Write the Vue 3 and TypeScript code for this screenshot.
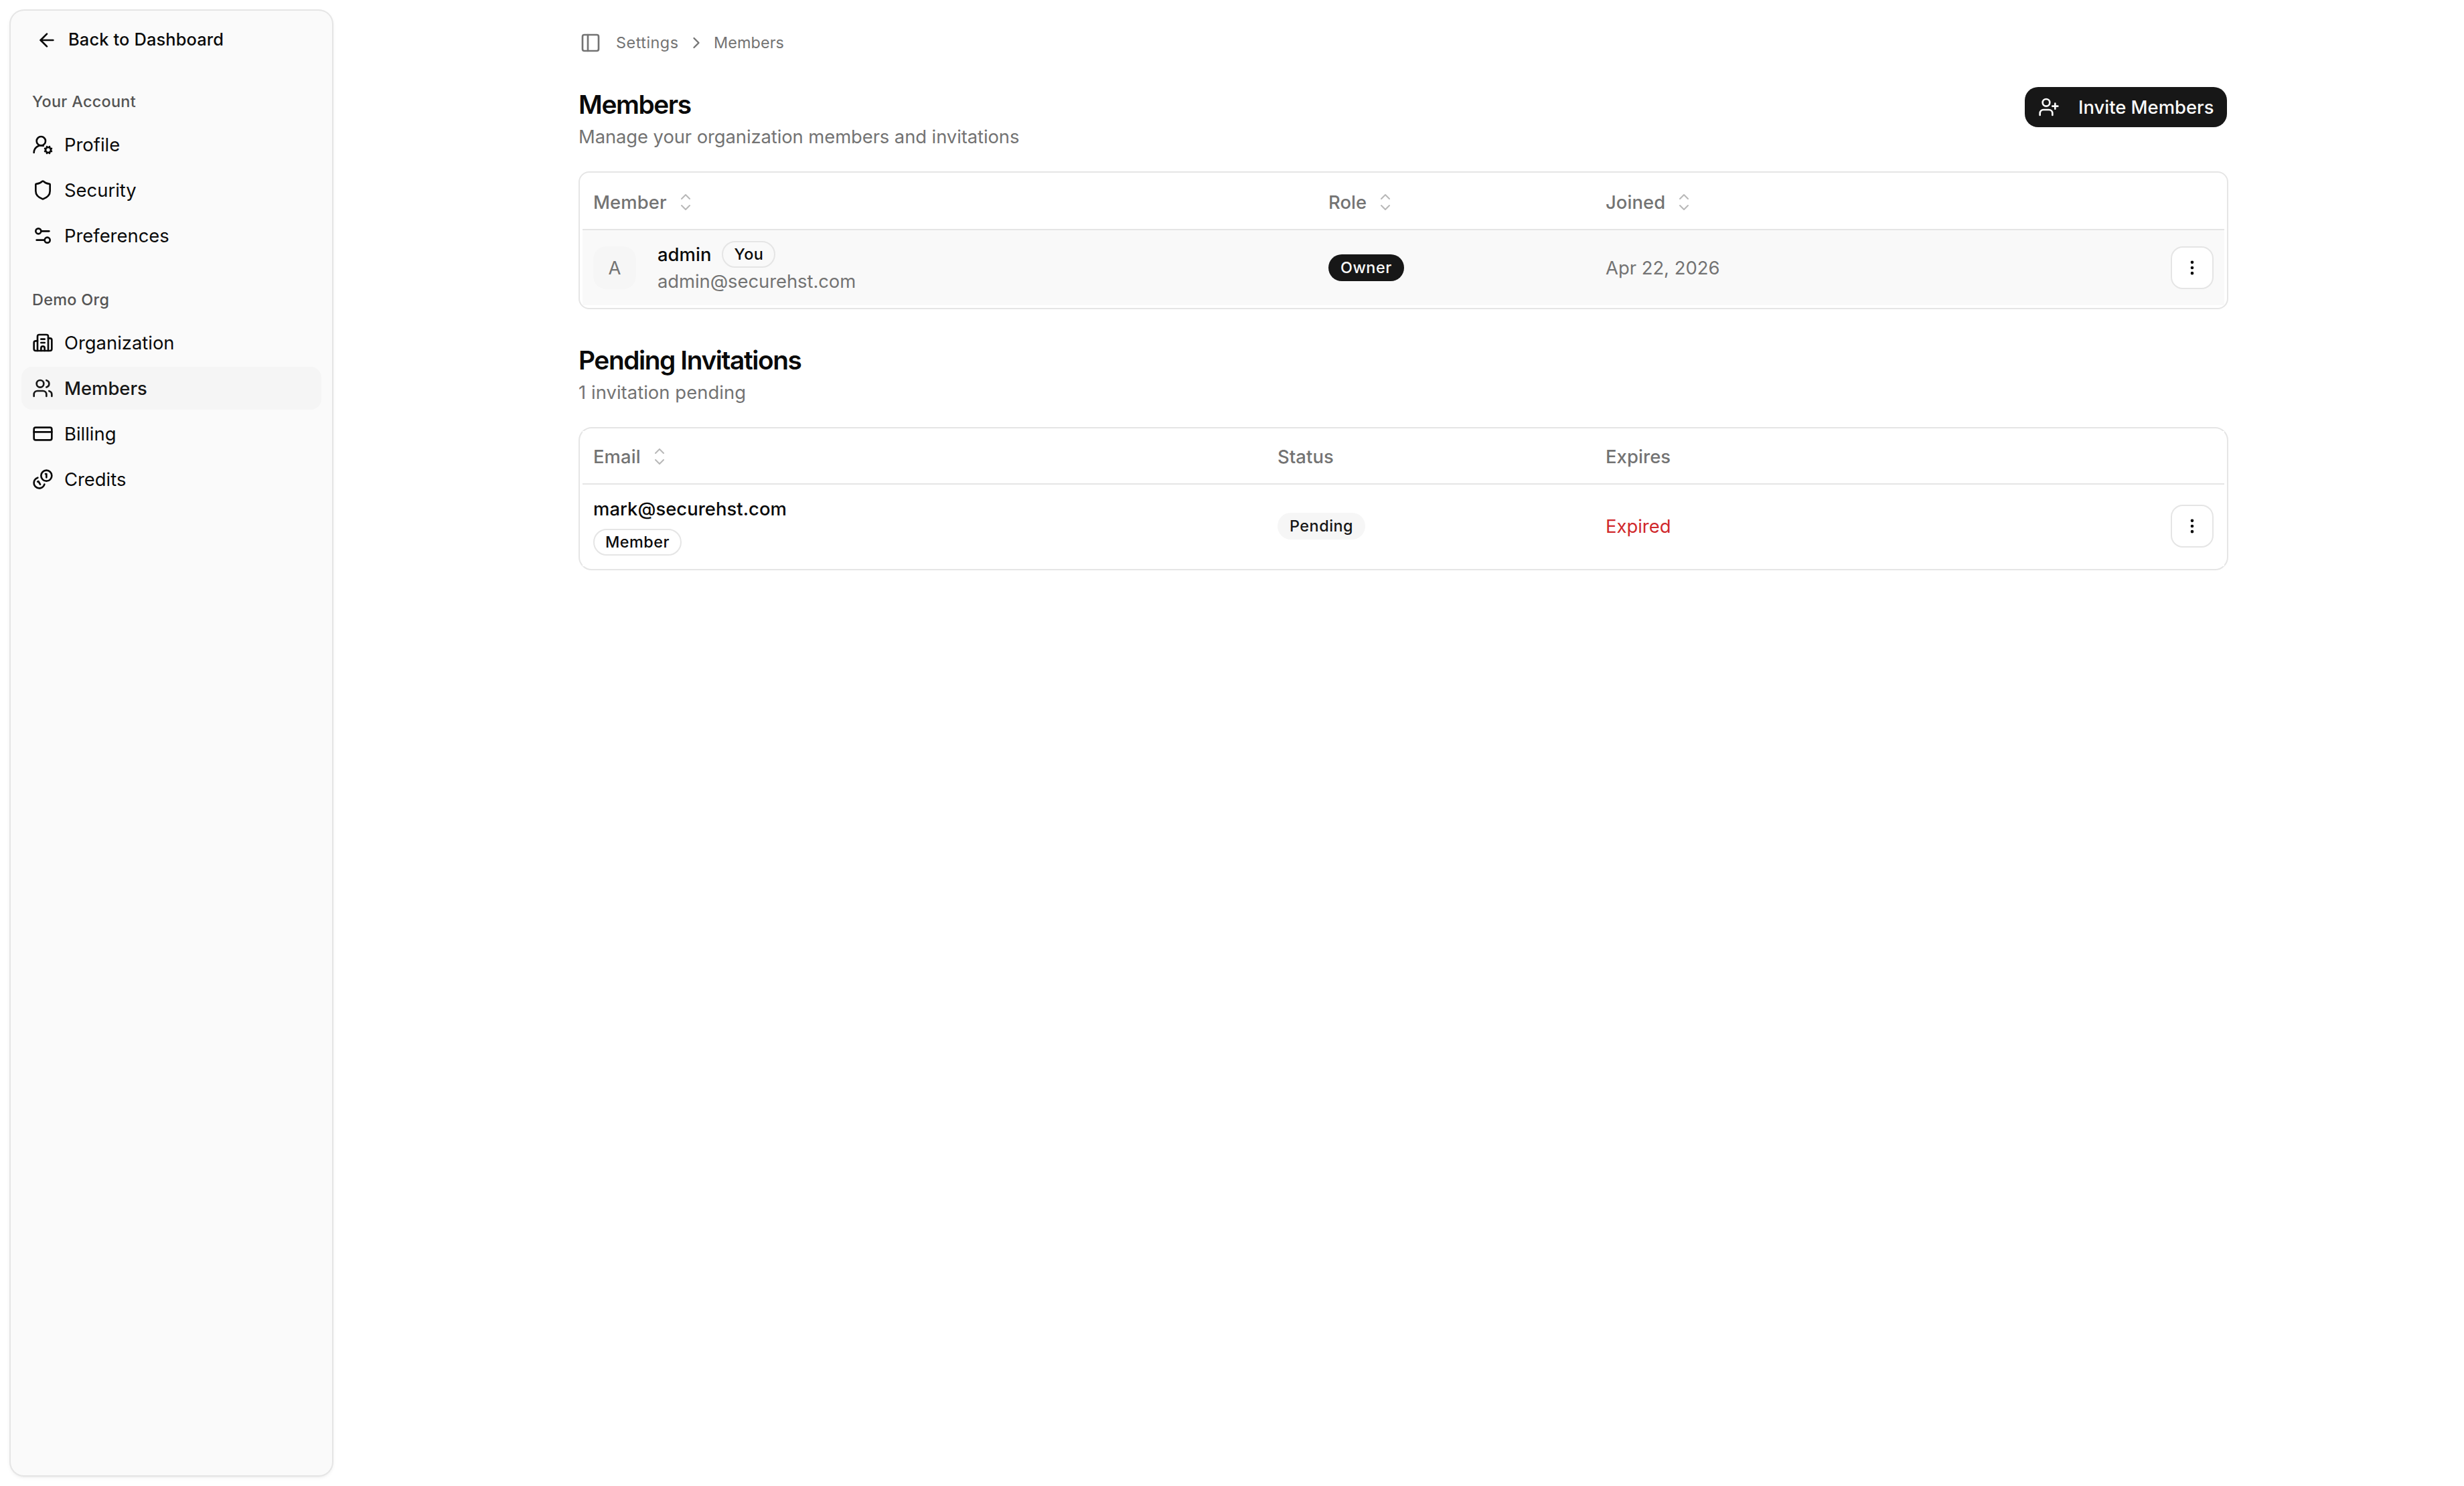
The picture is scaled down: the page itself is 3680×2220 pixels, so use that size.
<script setup lang="ts">
interface NavItem {
  label: string
  icon: string
  active?: boolean
}
interface NavGroup {
  label: string
  items: NavItem[]
}

const icons: Record<string, string> = {
  arrowLeft: '<path d="m12 19-7-7 7-7"/><path d="M19 12H5"/>',
  userCog:
    '<path d="m14.305 19.53.923-.382"/><path d="m15.228 16.852-.923-.383"/><path d="m16.852 15.228-.383-.923"/><path d="m16.852 20.772-.383.924"/><path d="m19.148 15.228.383-.923"/><path d="m19.53 21.696-.382-.924"/><path d="m20.772 16.852.924-.383"/><path d="m20.772 19.148.924.383"/><path d="M2 21a8 8 0 0 1 10.434-7.62"/><circle cx="18" cy="18" r="3"/><circle cx="10" cy="8" r="5"/>',
  shield:
    '<path d="M20 13c0 5-3.5 7.5-7.66 8.95a1 1 0 0 1-.67-.01C7.5 20.5 4 18 4 13V6a1 1 0 0 1 1-1c2 0 4.5-1.2 6.24-2.72a1.17 1.17 0 0 1 1.52 0C14.51 3.81 17 5 19 5a1 1 0 0 1 1 1z"/>',
  settings: '<path d="M14 17H5"/><path d="M19 7h-9"/><circle cx="17" cy="17" r="3"/><circle cx="7" cy="7" r="3"/>',
  building:
    '<path d="M10 12h4"/><path d="M10 8h4"/><path d="M14 21v-3a2 2 0 0 0-4 0v3"/><path d="M6 10H4a2 2 0 0 0-2 2v7a2 2 0 0 0 2 2h16a2 2 0 0 0 2-2V9a2 2 0 0 0-2-2h-2"/><path d="M6 21V5a2 2 0 0 1 2-2h8a2 2 0 0 1 2 2v16"/>',
  users:
    '<path d="M16 21v-2a4 4 0 0 0-4-4H6a4 4 0 0 0-4 4v2"/><path d="M16 3.128a4 4 0 0 1 0 7.744"/><path d="M22 21v-2a4 4 0 0 0-3-3.87"/><circle cx="9" cy="7" r="4"/>',
  card: '<rect width="20" height="14" x="2" y="5" rx="2"/><path d="M2 10h20"/>',
  coins:
    '<path d="M13.744 17.736a6 6 0 1 1-7.48-7.48"/><path d="M15 6h1v4"/><path d="m6.134 14.768.866-.5 2 3.464"/><circle cx="16" cy="8" r="6"/>',
  panel: '<rect width="18" height="18" x="3" y="3" rx="2"/><path d="M9 3v18"/>',
  chevronRight: '<path d="m9 18 6-6-6-6"/>',
  chevronUp: '<path d="m18 15-6-6-6 6"/>',
  chevronDown: '<path d="m6 9 6 6 6-6"/>',
  userPlus:
    '<path d="M16 21v-2a4 4 0 0 0-4-4H6a4 4 0 0 0-4 4v2"/><circle cx="9" cy="7" r="4"/><path d="M19 8v6"/><path d="M22 11h-6"/>',
  dots: '<circle cx="12" cy="12" r="1"/><circle cx="12" cy="5" r="1"/><circle cx="12" cy="19" r="1"/>',
}

const groups: NavGroup[] = [
  {
    label: 'Your Account',
    items: [
      { label: 'Profile', icon: 'userCog' },
      { label: 'Security', icon: 'shield' },
      { label: 'Preferences', icon: 'settings' },
    ],
  },
  {
    label: 'Demo Org',
    items: [
      { label: 'Organization', icon: 'building' },
      { label: 'Members', icon: 'users', active: true },
      { label: 'Billing', icon: 'card' },
      { label: 'Credits', icon: 'coins' },
    ],
  },
]

const memberColumns = ['Member', 'Role', 'Joined']
</script>

<template>
  <div class="app">
    <aside class="sidebar">
      <a class="back">
        <svg class="icon" viewBox="0 0 24 24" v-html="icons.arrowLeft" />
        <span>Back to Dashboard</span>
      </a>
      <nav v-for="group in groups" :key="group.label" class="group">
        <div class="group-label"><span>{{ group.label }}</span></div>
        <ul class="menu">
          <li v-for="item in group.items" :key="item.label" class="item" :class="{ active: item.active }">
            <svg class="icon" viewBox="0 0 24 24" v-html="icons[item.icon]" />
            <span>{{ item.label }}</span>
          </li>
        </ul>
      </nav>
    </aside>

    <main class="main">
      <div class="crumbs">
        <svg class="icon" viewBox="0 0 24 24" v-html="icons.panel" />
        <span class="crumb first">Settings</span>
        <svg class="icon chevron" viewBox="0 0 24 24" v-html="icons.chevronRight" />
        <span class="crumb">Members</span>
      </div>

      <header class="section-head">
        <div>
          <h1 class="title">Members</h1>
          <p class="desc"><span>Manage your organization members and invitations</span></p>
        </div>
        <button class="invite" type="button">
          <svg class="icon" viewBox="0 0 24 24" v-html="icons.userPlus" />
          <span>Invite Members</span>
        </button>
      </header>

      <section class="card members">
        <div class="table">
          <div class="row head">
            <div v-for="column in memberColumns" :key="column" class="cell">
              <span class="th">{{ column }}</span>
              <span class="sort">
                <svg class="icon" viewBox="0 0 24 24" v-html="icons.chevronUp" />
                <svg class="icon" viewBox="0 0 24 24" v-html="icons.chevronDown" />
              </span>
            </div>
            <div class="cell"></div>
          </div>
          <div class="row body own">
            <div class="cell">
              <div class="avatar"><span>A</span></div>
              <div class="who">
                <div class="name-line">
                  <span class="name">admin</span>
                  <span class="badge outline"><span>You</span></span>
                </div>
                <div class="email"><span>admin@securehst.com</span></div>
              </div>
            </div>
            <div class="cell"><span class="badge solid"><span>Owner</span></span></div>
            <div class="cell"><span class="muted">Apr 22, 2026</span></div>
            <div class="cell end">
              <button class="more" type="button"><svg class="icon" viewBox="0 0 24 24" v-html="icons.dots" /></button>
            </div>
          </div>
        </div>
      </section>

      <header class="section-head second">
        <div>
          <h2 class="title">Pending Invitations</h2>
          <p class="desc"><span>1 invitation pending</span></p>
        </div>
      </header>

      <section class="card invitations">
        <div class="table">
          <div class="row head">
            <div class="cell">
              <span class="th">Email</span>
              <span class="sort">
                <svg class="icon" viewBox="0 0 24 24" v-html="icons.chevronUp" />
                <svg class="icon" viewBox="0 0 24 24" v-html="icons.chevronDown" />
              </span>
            </div>
            <div class="cell"><span class="th">Status</span></div>
            <div class="cell"><span class="th">Expires</span></div>
            <div class="cell"></div>
          </div>
          <div class="row body">
            <div class="cell stack">
              <span class="name">mark@securehst.com</span>
              <span class="badge outline"><span>Member</span></span>
            </div>
            <div class="cell"><span class="badge soft"><span>Pending</span></span></div>
            <div class="cell"><span class="expired">Expired</span></div>
            <div class="cell end">
              <button class="more" type="button"><svg class="icon" viewBox="0 0 24 24" v-html="icons.dots" /></button>
            </div>
          </div>
        </div>
      </section>
    </main>
  </div>
</template>

<style>
body {
  margin: 0;
  background: #fff;
}
</style>

<style scoped>
.app {
  display: flex;
  box-sizing: border-box;
  width: 3680px;
  height: 2220px;
  padding: 16px;
  background: #fff;
  color: #0a0a0a;
  font-family: Inter, "Liberation Sans", sans-serif;
  font-size: 27.4px;
  line-height: 40px;
  overflow: hidden;
}
.app * {
  box-sizing: border-box;
}
.icon {
  display: block;
  flex: none;
  width: 32px;
  height: 32px;
  fill: none;
  stroke: currentColor;
  stroke-width: 2;
  stroke-linecap: round;
  stroke-linejoin: round;
}

.sidebar {
  flex: none;
  width: 480px;
  height: 2188px;
  border-radius: 20px;
  background: #fafafa;
  box-shadow: 0 0 0 2px #e5e5e5, 0 2px 6px rgba(0, 0, 0, 0.1), 0 2px 4px -2px rgba(0, 0, 0, 0.1);
}
.back {
  display: flex;
  align-items: center;
  gap: 16px;
  height: 56px;
  margin: 16px 16px 16px 38px;
  font-size: 25.4px;
  font-weight: 450;
  letter-spacing: 0.15px;
}
.back span {
  margin-top: -2px;
}
.group {
  padding: 16px;
}
.group-label {
  display: flex;
  align-items: center;
  height: 64px;
  padding: 0 16px;
  color: #545454;
  font-size: 23.4px;
  font-weight: 450;
  letter-spacing: 0.3px;
}
.menu {
  display: flex;
  flex-direction: column;
  gap: 4px;
  margin: 0;
  padding: 0;
  list-style: none;
}
.item {
  display: flex;
  align-items: center;
  gap: 16px;
  height: 64px;
  padding: 0 16px;
  border-radius: 16px;
}
.item.active {
  background: #f5f5f5;
  color: #171717;
  font-weight: 450;
}

.main {
  display: flex;
  flex-direction: column;
  width: 2464px;
  margin-left: 368px;
}
.crumbs {
  display: flex;
  align-items: center;
  height: 96px;
  padding-left: 2px;
  color: #737373;
  font-size: 23.4px;
  letter-spacing: 0.1px;
}
.crumb.first {
  width: 92px;
  margin-left: 22px;
  letter-spacing: 0.5px;
  white-space: nowrap;
}
.chevron {
  width: 28px;
  height: 28px;
  margin: 0 12px 0 14px;
}
.section-head {
  display: flex;
  justify-content: space-between;
  height: 144px;
  padding: 16px 2px 0 0;
}
.section-head.second {
  height: 176px;
  padding-top: 48px;
}
.title {
  margin: 0;
  font-size: 38.8px;
  font-weight: 600;
  line-height: 56px;
  letter-spacing: -1.4px;
}
.desc {
  margin: 0;
  color: #737373;
  letter-spacing: -0.08px;
}
.second .desc {
  letter-spacing: 0.05px;
}
.invite {
  display: flex;
  align-items: center;
  gap: 28px;
  width: 302px;
  height: 60px;
  margin-top: 2px;
  padding: 0 20px;
  border: 0;
  border-radius: 20px;
  background: #171717;
  color: #fafafa;
  font: inherit;
  font-weight: 450;
  white-space: nowrap;
}

.card {
  padding: 4px;
  border: 2px solid #e5e5e5;
}
.card.members {
  border-radius: 16px;
}
.card.invitations {
  border-radius: 20px;
}
.table {
  background: #fff;
}
.row {
  display: grid;
}
.members .row {
  grid-template-columns: 1098px 414px 400px 540px;
}
.invitations .row {
  grid-template-columns: 1022px 490px 400px 540px;
}
.head {
  border-bottom: 2px solid #e5e5e5;
  color: #737373;
  font-weight: 450;
  letter-spacing: 0.1px;
}
.members .head {
  height: 82px;
}
.invitations .head {
  height: 80px;
  padding-bottom: 2px;
}
.members .body {
  height: 112px;
}
.invitations .body {
  height: 122px;
}
.invitations .body .cell:not(.stack) {
  padding-top: 2px;
}
.own {
  background: #f9f9f9;
}
.cell {
  display: flex;
  align-items: center;
  padding: 0 16px;
}
.cell.end {
  justify-content: flex-end;
}
.sort {
  display: flex;
  flex-direction: column;
  margin-left: 16px;
  opacity: 0.5;
}
.sort .icon {
  width: 24px;
  height: 24px;
}
.sort .icon + .icon {
  margin-top: -8px;
}
.avatar {
  display: flex;
  align-items: center;
  justify-content: center;
  width: 64px;
  height: 64px;
  margin-right: 32px;
  border-radius: 20px;
  background: #f6f6f6;
  color: #737373;
}
.name-line {
  display: flex;
  align-items: center;
  gap: 16px;
  height: 40px;
}
.name {
  font-weight: 450;
  letter-spacing: 0.05px;
}
.email {
  letter-spacing: -0.05px;
}
.email,
.muted {
  color: #737373;
}
.badge {
  display: flex;
  align-items: center;
  justify-content: center;
  height: 40px;
  border: 2px solid transparent;
  border-radius: 20px;
  padding: 0 16px;
  font-size: 23.4px;
  font-weight: 450;
  line-height: 32px;
  letter-spacing: 0.5px;
}
.badge.outline {
  border-color: #e5e5e5;
}
.badge.solid {
  background: #171717;
  color: #fafafa;
}
.badge.soft {
  background: #f6f6f6;
  color: #171717;
}
.stack {
  flex-direction: column;
  align-items: flex-start;
  justify-content: center;
  gap: 10px;
}
.expired {
  color: #d0282c;
}
.more {
  display: flex;
  align-items: center;
  justify-content: center;
  width: 64px;
  height: 64px;
  padding: 0;
  border: 2px solid #e5e5e5;
  border-radius: 18px;
  background: #fff;
  color: #0a0a0a;
}
.more .icon {
  width: 28px;
  height: 28px;
}
</style>
